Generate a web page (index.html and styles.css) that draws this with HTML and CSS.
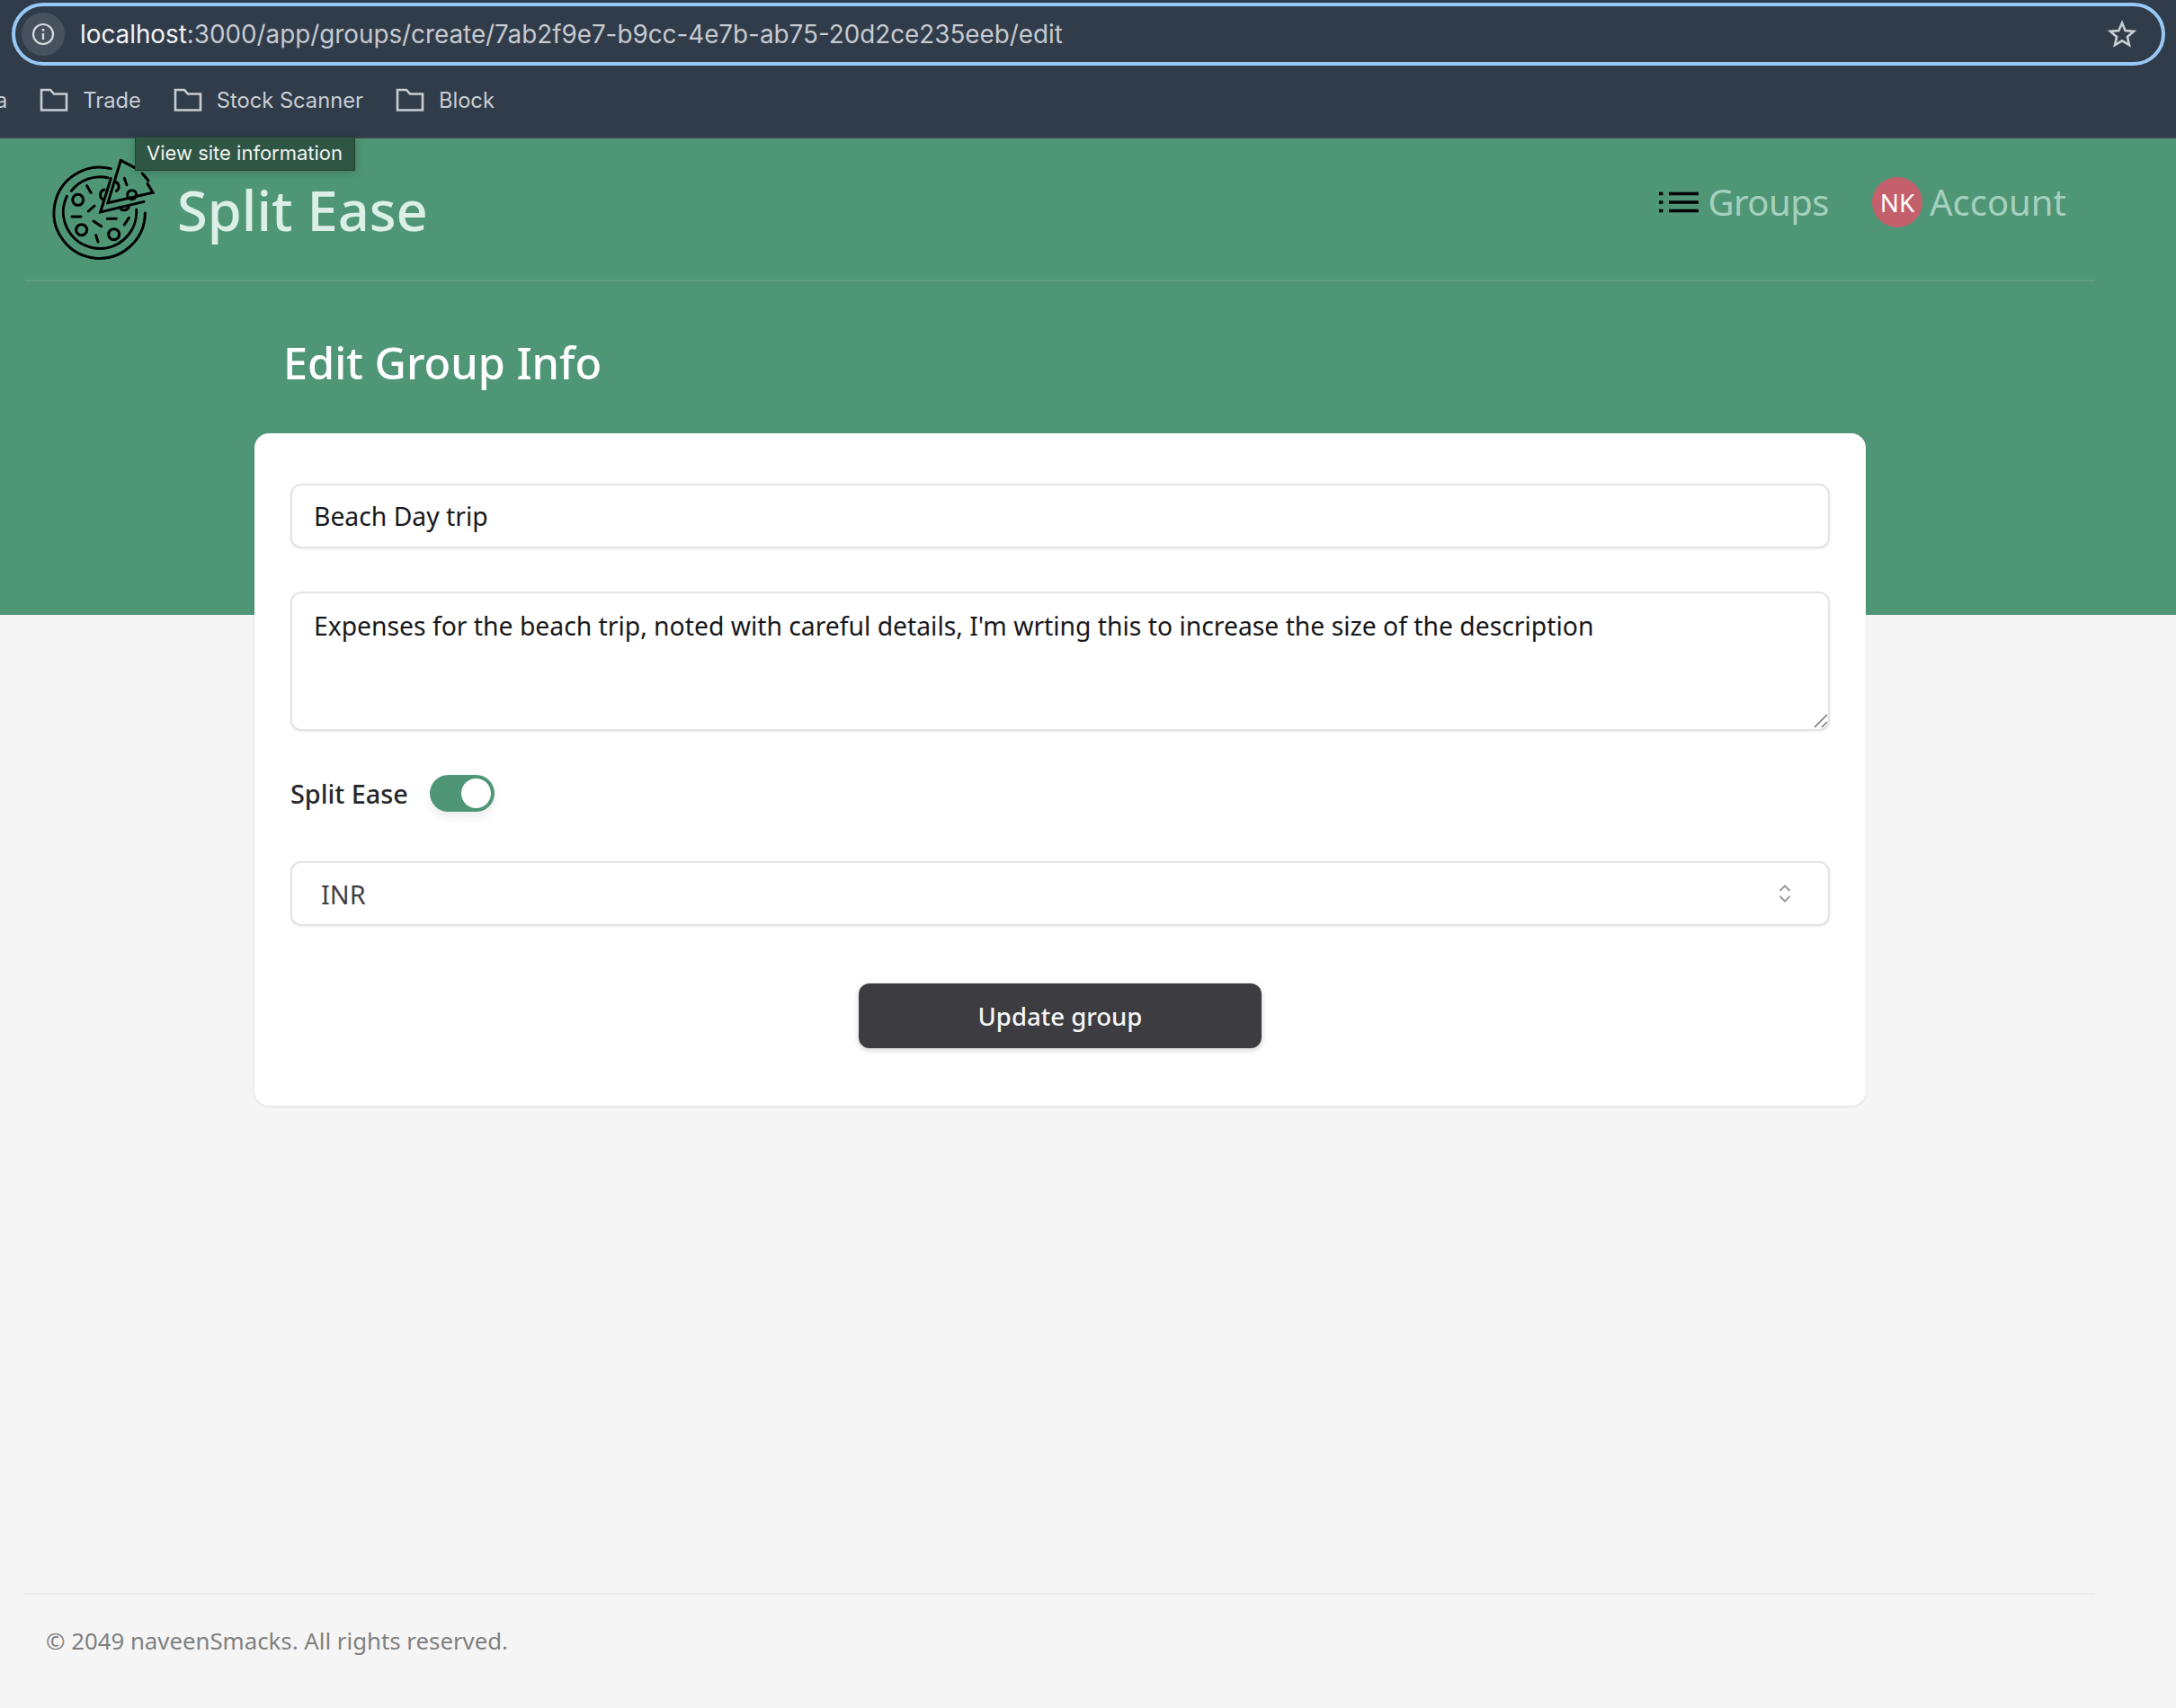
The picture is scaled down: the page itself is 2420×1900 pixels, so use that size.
FILE: index.html
```html
<!DOCTYPE html>
<html lang="en">
<head>
    <meta charset="UTF-8">
    <title>Split Ease</title>
    <link rel="stylesheet" href="styles.css">
</head>
<body>
    <div class="browser-bar">
        <div class="url-pill">
            <span class="info-chip">
                <svg width="26" height="26" viewBox="0 0 26 26" fill="none" stroke="#d5d8dc" stroke-width="2.2">
                    <circle cx="13" cy="13" r="11"/>
                    <path d="M13 12v7" stroke-width="2.4"/>
                    <path d="M13 7v2.6" stroke-width="2.6"/>
                </svg>
            </span>
            <span class="url-text"><span class="url-host">localhost</span>:3000/app/groups/create/7ab2f9e7-b9cc-4e7b-ab75-20d2ce235eeb/edit</span>
            <svg class="star" width="32" height="32" viewBox="0 0 32 32" fill="none" stroke="#c9cdd2" stroke-width="2.6" stroke-linejoin="miter">
                <path d="M16 3.5l3.6 8.6 9.3.8-7 6.1 2.1 9.1-8-4.8-8 4.8 2.1-9.1-7-6.1 9.3-.8z"/>
            </svg>
        </div>
        <div class="bookmarks">
            <span class="bookmark-cut">a</span>
            <span class="bookmark"><svg class="folder" viewBox="0 0 32 26"><path d="M2 24.5V2h10l4 4.5h14v18z"/></svg>Trade</span>
            <span class="bookmark"><svg class="folder" viewBox="0 0 32 26"><path d="M2 24.5V2h10l4 4.5h14v18z"/></svg>Stock Scanner</span>
            <span class="bookmark"><svg class="folder" viewBox="0 0 32 26"><path d="M2 24.5V2h10l4 4.5h14v18z"/></svg>Block</span>
        </div>
        <div class="tooltip">View site information</div>
    </div>

    <div class="hero">
        <nav class="navbar">
            <div class="brand">
                <svg class="logo" width="140" height="130" viewBox="0 0 420 390" fill="none" stroke="#000" stroke-width="9" stroke-linecap="round" stroke-linejoin="miter">
                    <path d="M250 68A152 152 0 1 0 364 216"/>
                    <path d="M118 142A122 122 0 0 1 240 98"/>
                    <path d="M103 160A122 122 0 1 0 335 205"/>
                    <path d="M250 100L215 213L360 178"/>
                    <path d="M283 40L240 182L390 148L372 118"/>
                    <path d="M283 40L340 70M355 84L375 108"/>
                    <circle cx="140" cy="172" r="18"/>
                    <circle cx="152" cy="272" r="18"/>
                    <circle cx="260" cy="287" r="18"/>
                    <circle cx="320" cy="155" r="15"/>
                    <path d="M228 138A18 18 0 0 0 226 172"/>
                    <path d="M262 112A16 16 0 0 1 268 142"/>
                    <path d="M280 198A16 16 0 0 0 310 192"/>
                    <path d="M170 125L183 148M175 210L195 192M120 228H150M192 243L218 260M238 235H268M295 255L310 232M200 290L207 312M295 100L303 122"/>
                </svg>
                <span class="brand-name">Split Ease</span>
            </div>
            <div class="nav-links">
                <a class="nav-link nav-groups">
                    <svg width="44" height="24" viewBox="0 0 44 24" fill="none" stroke="#000" stroke-width="3.4">
                        <path d="M11 2.5h33M11 12h33M11 21.5h33"/>
                        <path d="M0 2.5h4.5M0 12h4.5M0 21.5h4.5"/>
                    </svg>
                    Groups
                </a>
                <a class="nav-link nav-account">
                    <span class="avatar">NK</span>
                    Account
                </a>
            </div>
        </nav>
        <h1 class="page-title">Edit Group Info</h1>
    </div>

    <main class="card">
        <form class="group-form">
            <input class="field" type="text" value="Beach Day trip">
            <div class="area-wrap">
                <textarea class="field field-area">Expenses for the beach trip, noted with careful details, I'm wrting this to increase the size of the description</textarea>
                <svg class="resizer" width="16" height="16" viewBox="0 0 16 16" fill="none" stroke="#6f6f6f" stroke-width="1.5">
                    <path d="M1 15L15 1M9 15L15 9"/>
                </svg>
            </div>
            <div class="toggle-row">
                <label class="toggle-label">Split Ease</label>
                <span class="toggle"><span class="toggle-knob"></span></span>
            </div>
            <div class="select-wrap">
                <select class="field field-select">
                    <option>INR</option>
                </select>
                <svg class="chevrons" width="14" height="20" viewBox="0 0 14 20" fill="none" stroke="#9a9aa0" stroke-width="2">
                    <path d="M1.5 7L7 1.5L12.5 7M1.5 13L7 18.5L12.5 13"/>
                </svg>
            </div>
            <button class="submit-btn" type="button">Update group</button>
        </form>
    </main>

    <footer class="footer">
        <p>© 2049 naveenSmacks. All rights reserved.</p>
    </footer>
</body>
</html>
```

FILE: styles.css
```css
* {
    box-sizing: border-box;
}

body {
    margin: 0;
    min-height: 1900px;
    display: flex;
    flex-direction: column;
    background-color: #f5f5f5;
    font-family: "Noto Sans", Arial, sans-serif;
    color: #18181b;
}

/* browser chrome */
.browser-bar {
    position: relative;
    height: 154px;
    padding: 3px 12px 0 13px;
    background-color: #303c4a;
    border-bottom: 2px solid #3d4450;
    font-family: Inter, Arial, sans-serif;
}

.url-pill {
    height: 70px;
    display: flex;
    align-items: center;
    padding: 0 28px 0 7px;
    border: 4px solid #98c8f5;
    border-radius: 35px;
}

.info-chip {
    width: 48px;
    height: 48px;
    display: flex;
    align-items: center;
    justify-content: center;
    border-radius: 50%;
    background-color: #47525e;
}

.url-text {
    margin-left: 17px;
    font-size: 27.8px;
    color: #c6cad0;
}

.url-host {
    color: #f2f3f5;
}

.star {
    margin-left: auto;
}

.bookmarks {
    height: 76px;
    margin-left: -18px;
    display: flex;
    align-items: center;
    gap: 36px;
    font-size: 23.7px;
    color: #c9cdd2;
}

.bookmark {
    display: flex;
    align-items: center;
    gap: 16px;
}

.folder {
    width: 32px;
    height: 26px;
    fill: none;
    stroke: #c9cdd2;
    stroke-width: 2.6;
}

.tooltip {
    position: absolute;
    left: 150px;
    top: 152px;
    z-index: 2;
    height: 38px;
    padding: 0 13px 2px 12px;
    display: flex;
    align-items: center;
    background-color: #2f5544;
    border: 1px solid #24402f;
    box-shadow: 0 2px 10px rgba(0, 0, 0, 0.2);
    font-size: 22px;
    color: #f0f3f1;
}

/* green header */
.hero {
    height: 530px;
    margin-bottom: -202px;
    padding: 0 90px 0 28px;
    background-color: #4f9677;
}

.navbar {
    height: 159px;
    display: flex;
    align-items: flex-start;
    justify-content: space-between;
    padding: 11px 32px 0 12px;
    border-bottom: 2px solid #619f85;
}

.brand {
    display: flex;
    align-items: flex-start;
    gap: 17px;
}

.brand-name {
    margin-top: 28px;
    font-size: 61.4px;
    line-height: 80px;
    font-weight: 500;
    color: #dcefe6;
}

.nav-links {
    display: flex;
    align-items: center;
    gap: 48px;
    padding-top: 32px;
}

.nav-link {
    display: flex;
    align-items: center;
    font-size: 40px;
    line-height: 56px;
    color: #a5d0bd;
}

.nav-groups {
    gap: 10px;
    letter-spacing: -0.5px;
}

.nav-account {
    gap: 8px;
}

.avatar {
    width: 56px;
    height: 56px;
    display: flex;
    align-items: center;
    justify-content: center;
    border-radius: 50%;
    background-color: #c4606b;
    font-size: 28px;
    color: #fff;
}

.page-title {
    margin: 58px 0 0 287px;
    font-size: 48.6px;
    line-height: 64px;
    font-weight: 500;
    color: #fff;
}

/* form card */
.card {
    position: relative;
    width: 1792px;
    height: 748px;
    margin-left: 283px;
    padding: 56px 40px 0;
    background-color: #fff;
    border-radius: 16px;
    box-shadow: 0 1px 3px rgba(0, 0, 0, 0.1);
}

.group-form {
    display: flex;
    flex-direction: column;
}

.field {
    display: block;
    width: 100%;
    height: 72px;
    padding: 0 24px;
    border: 2px solid #e4e4e7;
    border-radius: 12px;
    background-color: #fff;
    box-shadow: 0 1px 3px rgba(0, 0, 0, 0.08);
    font-family: inherit;
    font-size: 28.3px;
    color: #18181b;
    outline: none;
}

.area-wrap {
    position: relative;
    margin-top: 48px;
}

.field-area {
    height: 155px;
    padding-top: 17px;
    line-height: 38px;
    resize: none;
}

.resizer {
    position: absolute;
    right: 2px;
    bottom: 3px;
}

.toggle-row {
    margin-top: 48px;
    height: 42px;
    display: flex;
    align-items: center;
    gap: 24px;
}

.toggle-label {
    font-size: 28.8px;
    font-weight: 500;
    color: #27272a;
}

.toggle {
    width: 72px;
    height: 41px;
    padding: 4px;
    display: flex;
    justify-content: flex-end;
    border-radius: 21px;
    background-color: #4f9677;
    box-shadow: 0 6px 12px rgba(0, 0, 0, 0.08);
}

.toggle-knob {
    width: 33px;
    height: 33px;
    border-radius: 50%;
    background-color: #fff;
}

.select-wrap {
    position: relative;
    margin-top: 55px;
}

.field-select {
    appearance: none;
    padding-left: 32px;
    font-size: 28.8px;
    color: #3f3f46;
}

.chevrons {
    position: absolute;
    right: 43px;
    top: 26px;
}

.submit-btn {
    width: 448px;
    height: 72px;
    margin: 64px auto 0;
    border: none;
    border-radius: 12px;
    background-color: #3c3c41;
    box-shadow: 0 2px 6px rgba(0, 0, 0, 0.2);
    font-family: inherit;
    font-size: 27.5px;
    font-weight: 500;
    color: #f5f5f5;
}

/* footer */
.footer {
    margin: auto 90px 0 27px;
    height: 128px;
    padding: 32px 24px 0;
    border-top: 2px solid #ececec;
}

.footer p {
    margin: 0;
    font-size: 25.8px;
    line-height: 38px;
    color: #808080;
}
```
